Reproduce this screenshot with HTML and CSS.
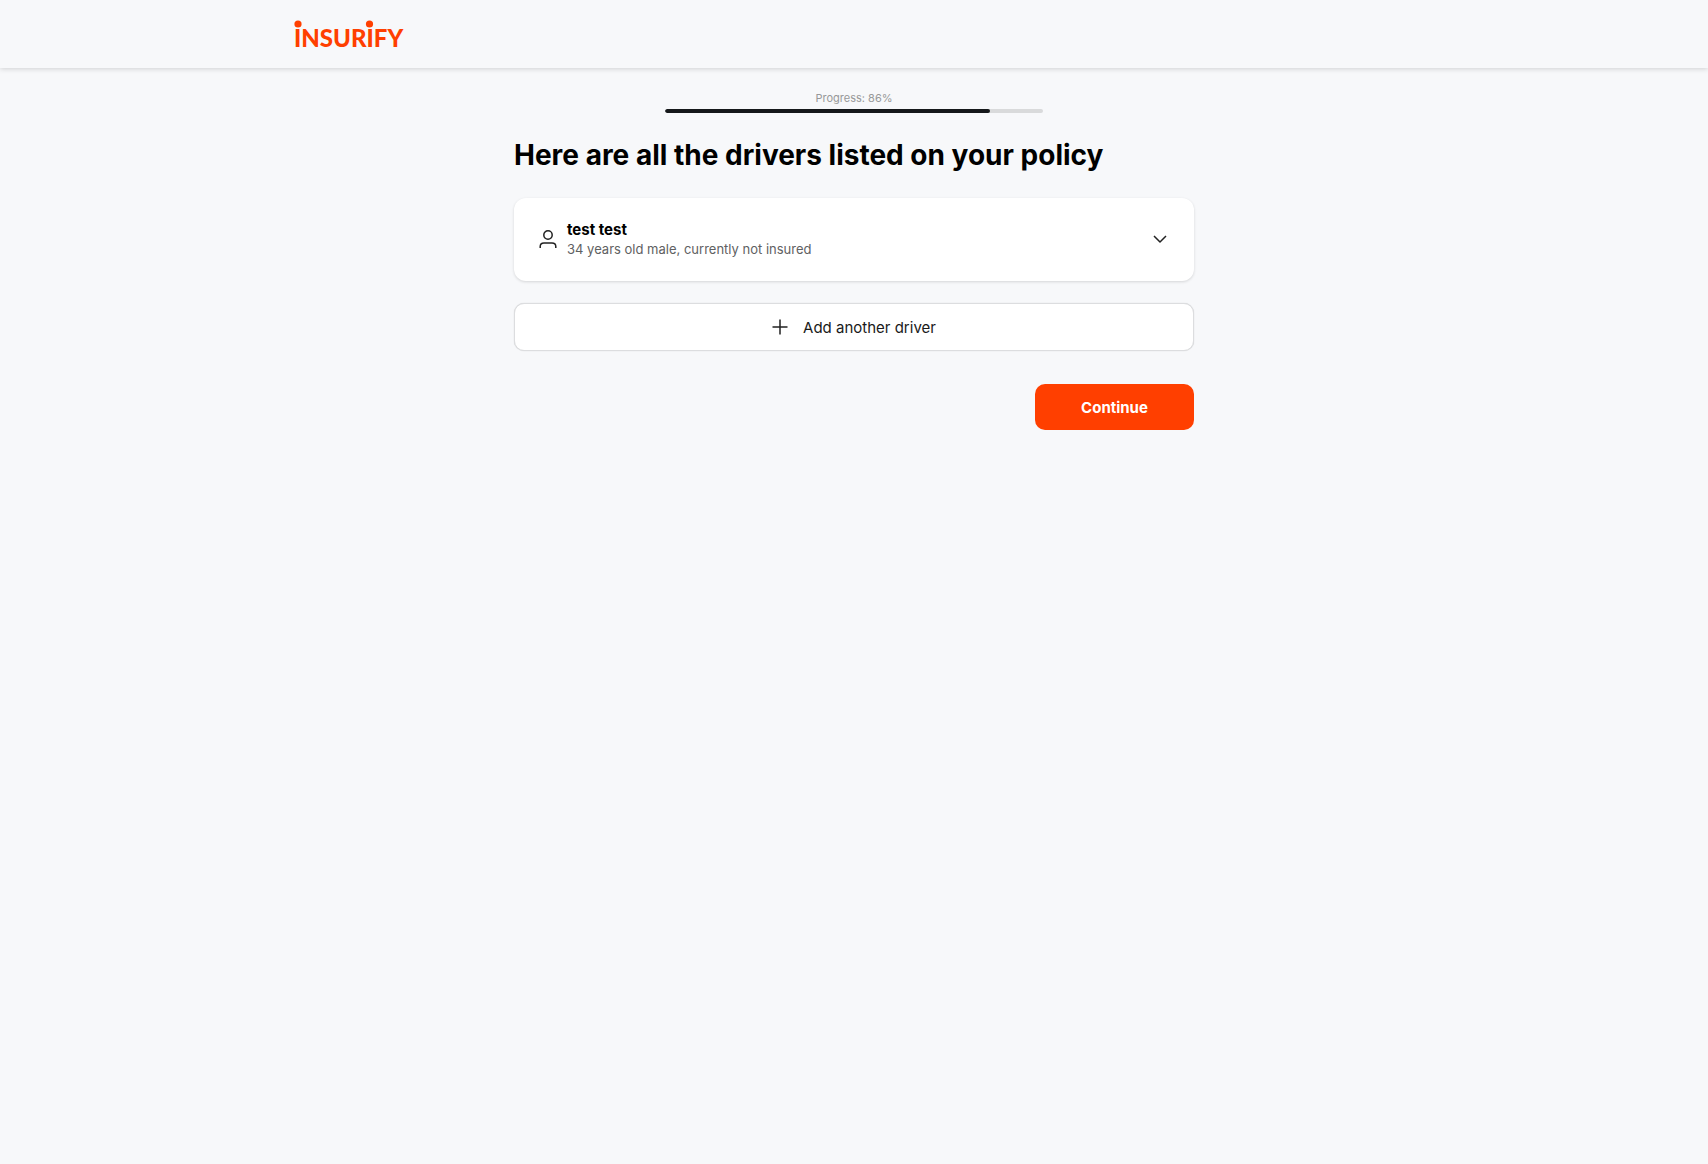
FILE: index.html
```html
<!DOCTYPE html>
<html lang="en">
<head>
  <meta charset="UTF-8">
  <meta name="viewport" content="width=device-width, initial-scale=1">
  <title>Insurify</title>
  <link rel="stylesheet" href="styles.css">
</head>
<body>
  <header class="header">
    <div class="header-inner">
      <a class="logo" href="#" aria-label="Insurify">
        <svg width="112" height="28" viewBox="0 0 112 28">
          <circle cx="4" cy="4" r="3.6"/>
          <circle cx="75.5" cy="4" r="3.6"/>
          <text x="0" y="27">INSURIFY</text>
        </svg>
      </a>
    </div>
  </header>

  <main class="main">
    <div class="progress">
      <span class="progress-label" id="progressLabel">Progress: 86%</span>
      <div class="progress-track" role="progressbar" aria-labelledby="progressLabel" aria-valuenow="86" aria-valuemin="0" aria-valuemax="100">
        <div class="progress-fill" style="width: 86%"></div>
      </div>
    </div>

    <h1 class="title">Here are all the drivers listed on your policy</h1>

    <button class="driver" type="button" aria-expanded="false">
      <svg class="driver-icon" width="18" height="20" viewBox="0 0 18 20">
        <circle cx="9" cy="5" r="4.2"/>
        <path d="M1.2 18v-1.4c0-2.1 1.6-3.6 3.8-3.6h8c2.2 0 3.8 1.5 3.8 3.6V18"/>
      </svg>
      <span class="driver-info">
        <span class="driver-name">test test</span>
        <span class="driver-details">34 years old male, currently not insured</span>
      </span>
      <svg class="chevron" width="14" height="10" viewBox="0 0 14 10">
        <path d="M1 1l6 6 6-6"/>
      </svg>
    </button>

    <button class="add-driver" type="button">
      <svg width="16" height="16" viewBox="0 0 16 16">
        <path d="M8 .5v15M.5 8h15"/>
      </svg>
      Add another driver
    </button>

    <div class="actions">
      <button class="continue" type="button">Continue</button>
    </div>
  </main>
</body>
</html>
```
FILE: styles.css
```css
* {
  box-sizing: border-box;
}
body {
  margin: 0;
  background-color: #f7f8fa;
  color: #000;
  font-family: Inter, "Liberation Sans", sans-serif;
}
button {
  font-family: inherit;
  cursor: pointer;
}
svg {
  flex-shrink: 0;
}
.header {
  box-shadow: 0 1px 5px rgba(0,0,0,0.16);
}
.header-inner {
  display: flex;
  align-items: center;
  max-width: 1120px;
  height: 68px;
  margin: 0 auto;
}
.logo svg {
  display: block;
  overflow: visible;
  fill: #ff3f00;
}
.logo text {
  font-family: Lato, sans-serif;
  font-size: 24px;
  font-weight: 900;
}
.main {
  max-width: 680px;
  margin: 0 auto;
  padding-top: 22px;
}
.progress {
  display: flex;
  flex-direction: column;
  align-items: center;
  gap: 3px;
}
.progress-label {
  font-size: 11px;
  line-height: 16px;
  color: #979899;
}
.progress-track {
  width: 100%;
  max-width: 378px;
  height: 4px;
  border-radius: 2px;
  background-color: #d9dadb;
  overflow: hidden;
}
.progress-fill {
  height: 100%;
  border-radius: 2px;
  background-color: #15181a;
}
.title {
  margin: 24px 0;
  font-size: 28px;
  line-height: 37px;
  font-weight: 700;
}
.driver {
  display: flex;
  align-items: center;
  gap: 10px;
  width: 100%;
  padding: 22px 27px 22px 25px;
  border: none;
  border-radius: 12px;
  background-color: #fff;
  box-shadow: 0 1px 3px rgba(0,0,0,0.14);
  text-align: left;
  color: #000;
}
.driver-icon,
.chevron,
.add-driver svg {
  fill: none;
  stroke: #222;
  stroke-width: 1.5;
  stroke-linejoin: round;
}
.driver-info {
  display: flex;
  flex: 1;
  flex-direction: column;
}
.driver-name {
  font-size: 15px;
  line-height: 20px;
  font-weight: 700;
}
.driver-details {
  font-size: 13px;
  line-height: 19px;
  color: #606162;
}
.add-driver {
  display: flex;
  align-items: center;
  justify-content: center;
  gap: 15px;
  width: 100%;
  height: 48px;
  margin-top: 22px;
  border: 1px solid #dcdddf;
  border-radius: 10px;
  background-color: #fff;
  box-shadow: 0 0 1px rgba(0,0,0,0.2);
  font-size: 15px;
  color: #1a1a1a;
}
.actions {
  display: flex;
  justify-content: flex-end;
  margin-top: 33px;
}
.continue {
  width: 159px;
  height: 46px;
  border: none;
  border-radius: 10px;
  background-color: #ff3f00;
  font-size: 15px;
  font-weight: 700;
  color: #fff;
}
```
